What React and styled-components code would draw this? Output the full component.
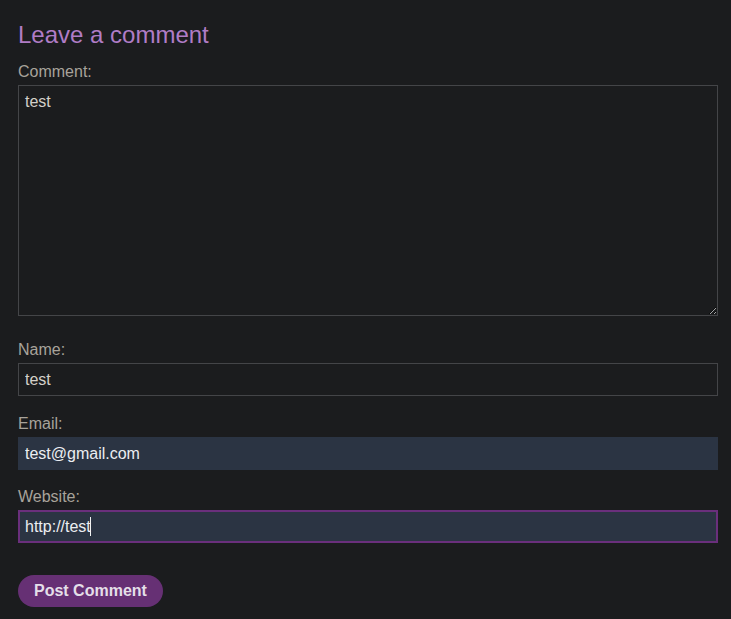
import React from "react";
import styled, { createGlobalStyle } from "styled-components";

const GlobalStyle = createGlobalStyle`
  html, body {
    margin: 0;
    padding: 0;
    background: #1b1c1e;
    font-family: "Liberation Sans", Arial, sans-serif;
  }
`;

const Page = styled.div`
  width: 700px;
  padding: 21px 13px 12px 18px;
`;

const Heading = styled.h2`
  margin: 0 0 14px;
  font-size: 24px;
  line-height: 28px;
  font-weight: normal;
  color: #b07cc6;
`;

const Field = styled.div`
  display: flex;
  flex-direction: column;
  margin-bottom: ${(p) => p.$gap || 19}px;
`;

const Label = styled.label`
  font-size: 16px;
  line-height: 18px;
  color: #a8a39b;
  margin-bottom: 4px;
`;

const TextArea = styled.textarea`
  box-sizing: border-box;
  width: 700px;
  height: 231px;
  margin: 0;
  padding: 6px;
  background: #1b1c1e;
  border: 1px solid #444548;
  border-radius: 0;
  color: #d4d0c9;
  font: 16px/19px "Liberation Sans", Arial, sans-serif;
  outline: none;
  resize: vertical;
`;

const InputWrap = styled.div`
  position: relative;
  width: 700px;
`;

const Input = styled.input`
  box-sizing: border-box;
  width: 700px;
  height: 33px;
  margin: 0;
  padding: 6px;
  background: ${(p) => (p.$filled ? "#2b3443" : "#1b1c1e")};
  border: ${(p) => (p.$focused ? "2px solid #6a2f7c" : p.$filled ? "1px solid #2b3443" : "1px solid #444548")};
  padding-left: ${(p) => (p.$focused ? 5 : 6)}px;
  border-radius: 0;
  color: ${(p) => (p.$filled ? "#eceef2" : "#d4d0c9")};
  font: 16px/19px "Liberation Sans", Arial, sans-serif;
  outline: none;
`;

const Caret = styled.span`
  position: absolute;
  left: 72px;
  top: 7px;
  width: 1px;
  height: 19px;
  background: #f2f2f2;
  pointer-events: none;
`;

const Button = styled.button`
  display: inline-block;
  height: 32px;
  padding: 0 16px;
  border: none;
  border-radius: 16px;
  background: #663074;
  color: #e4dfe8;
  font: bold 16px/32px "Liberation Sans", Arial, sans-serif;
  cursor: pointer;
`;

export default function App() {
  return (
    <Page>
      <GlobalStyle />
      <Heading>Leave a comment</Heading>
      <Field $gap={25}>
        <Label>Comment:</Label>
        <TextArea defaultValue="test" />
      </Field>
      <Field>
        <Label>Name:</Label>
        <Input defaultValue="test" />
      </Field>
      <Field $gap={18}>
        <Label>Email:</Label>
        <Input $filled defaultValue="test@gmail.com" />
      </Field>
      <Field $gap={32}>
        <Label>Website:</Label>
        <InputWrap>
          <Input $filled $focused defaultValue="http://test" />
          <Caret />
        </InputWrap>
      </Field>
      <Button>Post Comment</Button>
    </Page>
  );
}
